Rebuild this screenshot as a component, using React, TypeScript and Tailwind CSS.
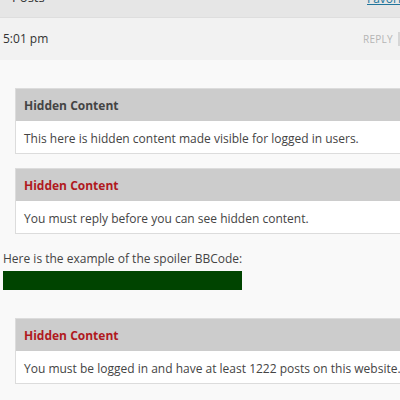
import React from 'react';

function HiddenBox({ title, body, red }: { title: string; body: string; red?: boolean }) {
  return (
    <div className="ml-[15px] w-[400px] border border-[#dcdcdc]">
      <div className="h-[32px] bg-[#cccccc] flex items-center px-[8px] pt-[1px]">
        <span className={`text-[12px] font-bold ${red ? 'text-[#b0191e]' : 'text-[#444444]'}`}>{title}</span>
      </div>
      <div className="h-[32px] bg-white flex items-center px-[8px] pt-[3px] text-[12px] text-[#444444] whitespace-nowrap">{body}</div>
    </div>
  );
}

export default function App() {
  return (
    <div className="w-[400px] h-[400px] overflow-hidden bg-[#f9f9f9] font-['Open_Sans',sans-serif]">
      <div className="h-[18px] bg-[#e6e6e6] border-b border-[#dedede] flex items-start pl-[12px] overflow-hidden relative whitespace-nowrap">
        <span className="text-[13px] text-[#333] leading-none -translate-y-[9px]">Posts</span>
        <span className="absolute left-[367px] top-0 text-[12px] text-[#21759b] underline leading-none -translate-y-[7px]">Favorites</span>
      </div>
      <div className="h-[42px] bg-[#f2f2f2] flex items-center justify-between pl-[3px]">
        <span className="text-[12px] text-[#333]">5:01 pm</span>
        <div className="flex items-center h-[14px]">
          <span className="text-[10px] text-[#b5b5b5] tracking-[0.3px]">REPLY</span>
          <span className="ml-[5px] h-[14px] w-[2px] bg-[#d6d6d6]" />
        </div>
      </div>
      <div className="pt-[28px]">
        <HiddenBox title="Hidden Content" body="This here is hidden content made visible for logged in users." />
        <div className="h-[14px]" />
        <HiddenBox title="Hidden Content" body="You must reply before you can see hidden content." red />
        <div className="pl-[3px] pt-[16px] text-[12px] text-[#444] leading-[18px]">Here is the example of the spoiler BBCode:</div>
        <div className="ml-[3px] mt-[3px] w-[239px] h-[19px] bg-[#004400]" />
        <div className="h-[28px]" />
        <HiddenBox title="Hidden Content" body="You must be logged in and have at least 1222 posts on this website." red />
      </div>
    </div>
  );
}
